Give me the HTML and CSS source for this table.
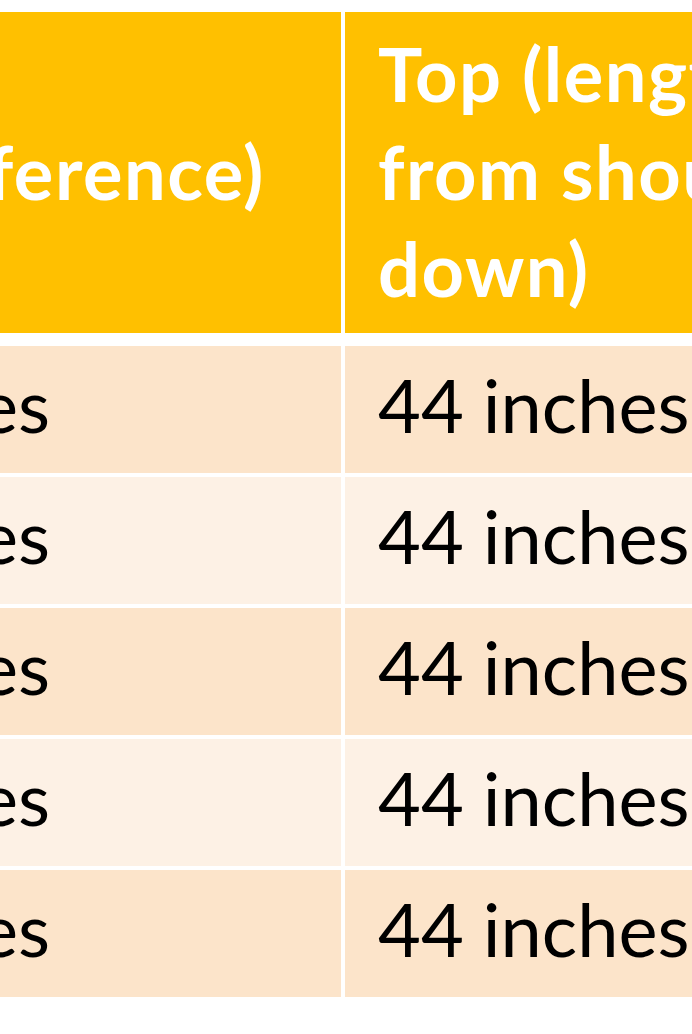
FILE: index.html
```html
<!DOCTYPE html>
<html lang="en">
<head>
<meta charset="utf-8">
<title>Size chart</title>
<link rel="stylesheet" href="styles.css">
</head>
<body>
<div class="viewport">
  <div class="chart">
    <div class="cell head">(circumference)</div>
    <div class="cell head">Top (length from shoulder down)</div>

    <div class="cell band-a">40 inches</div>
    <div class="cell band-a">44 inches</div>

    <div class="cell band-b">40 inches</div>
    <div class="cell band-b">44 inches</div>

    <div class="cell band-a">40 inches</div>
    <div class="cell band-a">44 inches</div>

    <div class="cell band-b">40 inches</div>
    <div class="cell band-b">44 inches</div>

    <div class="cell band-a">40 inches</div>
    <div class="cell band-a">44 inches</div>
  </div>
</div>
</body>
</html>
```

FILE: styles.css
```css
html, body {
  margin: 0;
  padding: 0;
  background: #ffffff;
}

.viewport {
  width: 692px;
  height: 1034px;
  overflow: hidden;
  padding-top: 12px;
  box-sizing: border-box;
}

.chart {
  display: grid;
  grid-template-columns: 635.5px 580px;
  grid-template-rows: auto repeat(5, 127px);
  column-gap: 4px;
  row-gap: 4px;
  margin-left: -294.5px;
  font-family: Lato, "Open Sans", sans-serif;
  color: #000000;
}

.cell {
  display: flex;
  align-items: center;
  padding: 0 20px 10px 33px;
  box-sizing: border-box;
  font-size: 74px;
  line-height: 97.5px;
  white-space: nowrap;
}

.head {
  background: #ffc000;
  color: #ffffff;
  font-weight: 700;
  letter-spacing: 1.5px;
  white-space: normal;
  padding: 0 20px 2px 33px;
  margin-bottom: 9px;
  height: 321px;
}

.band-a {
  background: #fce4ca;
}

.band-b {
  background: #fdf1e5;
}
```
